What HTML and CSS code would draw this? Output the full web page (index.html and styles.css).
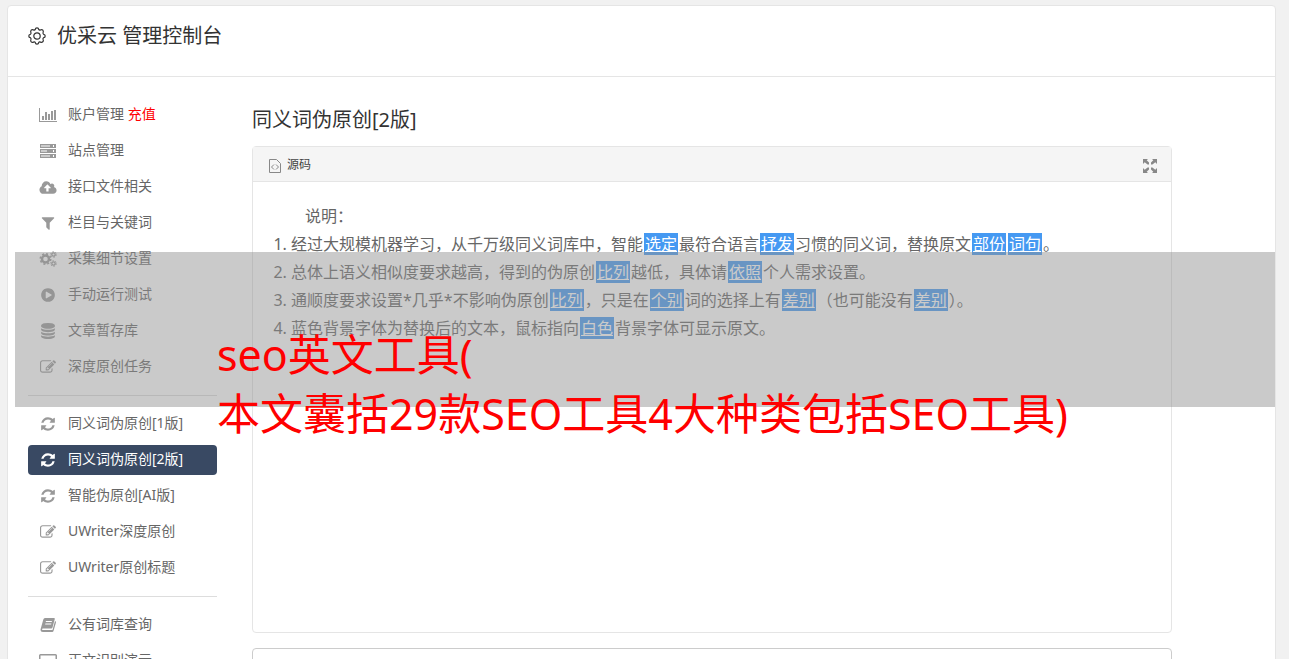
FILE: index.html
```
<!DOCTYPE html>
<html lang="zh-CN">

<head>
  <meta charset="UTF-8">
  <meta name="viewport" content="width=device-width, initial-scale=1.0">
  <title>优采云 管理控制台</title>
  <link rel="stylesheet" href="styles.css">
</head>

<body>

  <!-- 图标 -->
  <svg class="sprite" aria-hidden="true">
    <symbol id="i-chart" viewBox="0 0 18 16">
      <path d="M0 1h1v13h17v1H0zM3 9h2v4H3zM6 5h2v8H6zM9 7h2v6H9zM12 4h2v9h-2zM15 3h2v10h-2z" />
    </symbol>
    <symbol id="i-server" viewBox="0 0 18 16">
      <path fill-rule="evenodd" d="M1 1h16v4H1zM2 2v2h9V2zM14 2v2h1V2zM1 6h16v4H1zM2 7v2h6V7zM14 7v2h1V7zM1 11h16v4H1zM2 12v2h9v-2zM14 12v2h1v-2z" />
      <path opacity=".5" d="M2 2h9v2H2zM2 7h9v2H2zM2 12h9v2H2z" />
    </symbol>
    <symbol id="i-cloud" viewBox="0 0 1920 1792">
      <path d="M1280 992q0-14-9-23l-352-352q-9-9-23-9t-23 9l-351 351q-10 12-10 24 0 14 9 23t23 9h224v352q0 13 9.500 22.500t22.500 9.500h192q13 0 22.500-9.500t9.500-22.500v-352h224q13 0 22.500-9.500t9.500-22.500zm640 288q0 159-112.500 271.500t-271.500 112.500h-1088q-185 0-316.500-131.500t-131.500-316.500q0-130 70-240t188-165q-2-30-2-43 0-212 150-362t362-150q156 0 285.500 87t188.500 231q71-62 166-62 106 0 181 75t75 181q0 76-41 138 130 31 213.500 135.500t83.500 238.500z" />
    </symbol>
    <symbol id="i-filter" viewBox="0 0 1792 1792">
      <path d="M1595 295q17 41-14 70l-493 493v742q0 42-39 59-13 5-25 5-27 0-45-19l-256-256q-19-19-19-45v-486l-493-493q-31-29-14-70 17-39 59-39h1280q42 0 59 39z" />
    </symbol>
    <symbol id="i-gears" viewBox="0 0 18 16">
      <g fill="none" stroke="currentColor">
        <circle cx="6.500" cy="8" r="3.500" stroke-width="2.400" />
        <circle cx="6.500" cy="8" r="5.200" stroke-width="1.600" stroke-dasharray="2 2.084" />
        <circle cx="14.500" cy="3.500" r="1.700" stroke-width="1.300" />
        <circle cx="14.500" cy="3.500" r="2.800" stroke-width="1" stroke-dasharray="1.400 1.532" />
        <circle cx="14.500" cy="12.500" r="1.700" stroke-width="1.300" />
        <circle cx="14.500" cy="12.500" r="2.800" stroke-width="1" stroke-dasharray="1.400 1.532" />
      </g>
    </symbol>
    <symbol id="i-play" viewBox="0 0 1792 1792">
      <path d="M896 128q209 0 385.500 103t279.500 279.500 103 385.500-103 385.500-279.500 279.500-385.500 103-385.500-103-279.500-279.500-103-385.500 103-385.500 279.500-279.500 385.500-103zm384 823q32-18 32-55t-32-55l-544-320q-31-19-64-1-32 19-32 56v640q0 37 32 56 16 8 32 8 17 0 32-9z" />
    </symbol>
    <symbol id="i-database" viewBox="0 0 1792 1792">
      <path d="M896 768q237 0 443-43t325-127v170q0 69-103 128t-280 93.500-385 34.500-385-34.500-280-93.500-103-128v-170q119 84 325 127t443 43zm0 768q237 0 443-43t325-127v170q0 69-103 128t-280 93.500-385 34.500-385-34.500-280-93.500-103-128v-170q119 84 325 127t443 43zm0-384q237 0 443-43t325-127v170q0 69-103 128t-280 93.500-385 34.500-385-34.500-280-93.500-103-128v-170q119 84 325 127t443 43zm0-1152q208 0 385 34.500t280 93.500 103 128v128q0 69-103 128t-280 93.500-385 34.500-385-34.500-280-93.500-103-128v-128q0-69 103-128t280-93.500 385-34.500z" />
    </symbol>
    <symbol id="i-edit" viewBox="0 0 1792 1792">
      <path d="M888 1184l116-116-152-152-116 116v56h96v96h56zm440-720q-16-16-33 1l-350 350q-17 17-1 33t33-1l350-350q17-17 1-33zm80 594v190q0 119-84.500 203.500t-203.500 84.500h-832q-119 0-203.500-84.500t-84.500-203.500v-832q0-119 84.500-203.500t203.500-84.500h832q63 0 117 25 15 7 18 23 3 17-9 29l-49 49q-14 14-32 8-23-6-45-6h-832q-66 0-113 47t-47 113v832q0 66 47 113t113 47h832q66 0 113-47t47-113v-126q0-13 9-22l64-64q15-15 35-7t20 29zm-96-738l288 288-672 672h-288v-288zm444 132l-92 92-288-288 92-92q28-28 68-28t68 28l152 152q28 28 28 68t-28 68z" />
    </symbol>
    <symbol id="i-refresh" viewBox="0 0 1792 1792">
      <path d="M1639 1056q0 5-1 7-64 268-268 434.500t-478 166.500q-146 0-282.500-55t-243.500-157l-129 129q-19 19-45 19t-45-19-19-45v-448q0-26 19-45t45-19h448q26 0 45 19t19 45-19 45l-137 137q71 66 161 102t187 36q134 0 250-65t186-179q11-17 53-117 8-23 30-23h192q13 0 22.500 9.500t9.500 22.500zm25-800v448q0 26-19 45t-45 19h-448q-26 0-45-19t-19-45 19-45l138-138q-148-137-349-137-134 0-250 65t-186 179q-11 17-53 117-8 23-30 23h-199q-13 0-22.500-9.500t-9.500-22.500v-7q65-268 270-434.500t480-166.500q146 0 284 55.500t245 156.500l130-129q19-19 45-19t45 19 19 45z" />
    </symbol>
    <symbol id="i-book" viewBox="0 0 16 16">
      <path fill-rule="evenodd" d="M5 1h9q1 0 .8 1L12.500 10.500q-.3 1-1.300 1H3q-1 0-1 .8t1 .7h9.500L15 4l.8.500q.3.500.1 1.200L13.500 14q-.3 1-1.300 1H3Q.5 15 .5 12.500L3.300 2.500Q3.700 1 5 1zM6 4l-.3 1h6l.3-1zM5.400 6.500l-.3 1h6l.3-1z" />
    </symbol>
    <symbol id="i-screen" viewBox="0 0 18 16">
      <path fill-rule="evenodd" d="M1.500 1h15q1.500 0 1.500 1.500v9q0 1.500-1.500 1.500H12v2H6v-2H1.500Q0 13 0 11.500v-9Q0 1 1.500 1zM1.500 2.500v8h15v-8z" />
    </symbol>
  </svg>

  <div class="panel">
    <header class="panel-header">
      <svg class="logo" viewBox="0 0 18 18" aria-hidden="true">
        <g fill="none" stroke="currentColor" stroke-width="1.200" stroke-linejoin="round">
          <path d="M7.300 2.400Q7.400.8 9 .8t1.700 1.600q.6 1 1.800.5 1.400-.8 2.300.3t.3 2.300q-.3 1.300.5 1.800 1.600.1 1.600 1.700t-1.600 1.700q-.9.500-.5 1.800.7 1.400-.3 2.300t-2.300.3q-1.300-.5-1.800.5-.1 1.600-1.700 1.600t-1.700-1.600q-.5-1-1.800-.5-1.400.6-2.300-.3t-.3-2.300q.4-1.300-.5-1.800Q.8 10.600.8 9t1.600-1.700q.9-.5.5-1.800-.6-1.300.3-2.300t2.300-.3q1.200.5 1.800-.5z" />
          <circle cx="9" cy="9" r="3.200" />
        </g>
      </svg>
      <h1 class="panel-title">优采云 管理控制台</h1>
    </header>

    <div class="panel-body">
      <nav class="sidebar">
        <a href="#" class="menu-item"><svg class="icon"><use href="#i-chart" /></svg><span>账户管理 <span class="recharge">充值</span></span></a>
        <a href="#" class="menu-item"><svg class="icon"><use href="#i-server" /></svg>站点管理</a>
        <a href="#" class="menu-item"><svg class="icon"><use href="#i-cloud" /></svg>接口文件相关</a>
        <a href="#" class="menu-item"><svg class="icon"><use href="#i-filter" /></svg>栏目与关键词</a>
        <a href="#" class="menu-item"><svg class="icon"><use href="#i-gears" /></svg>采集细节设置</a>
        <a href="#" class="menu-item"><svg class="icon"><use href="#i-play" /></svg>手动运行测试</a>
        <a href="#" class="menu-item"><svg class="icon"><use href="#i-database" /></svg>文章暂存库</a>
        <a href="#" class="menu-item"><svg class="icon"><use href="#i-edit" /></svg>深度原创任务</a>
        <hr class="divider">
        <a href="#" class="menu-item"><svg class="icon"><use href="#i-refresh" /></svg>同义词伪原创[1版]</a>
        <a href="#" class="menu-item active"><svg class="icon"><use href="#i-refresh" /></svg>同义词伪原创[2版]</a>
        <a href="#" class="menu-item"><svg class="icon"><use href="#i-refresh" /></svg>智能伪原创[AI版]</a>
        <a href="#" class="menu-item"><svg class="icon"><use href="#i-edit" /></svg>UWriter深度原创</a>
        <a href="#" class="menu-item"><svg class="icon"><use href="#i-edit" /></svg>UWriter原创标题</a>
        <hr class="divider">
        <a href="#" class="menu-item"><svg class="icon"><use href="#i-book" /></svg>公有词库查询</a>
        <a href="#" class="menu-item"><svg class="icon"><use href="#i-screen" /></svg>正文识别演示</a>
      </nav>

      <main class="content">
        <h2 class="content-title">同义词伪原创[2版]</h2>

        <div class="editor">
          <div class="toolbar">
            <button type="button" class="tool">
              <svg class="tool-source" viewBox="0 0 12 14" aria-hidden="true">
                <path fill="none" stroke="currentColor" d="M.5.5h7l4 4v9H.5zM5 5.500L2.500 8 5 10.500M7 5.500L9.500 8 7 10.500" />
              </svg>
              源码
            </button>
            <button type="button" class="tool" aria-label="全屏">
              <svg class="tool-full" viewBox="0 0 14 14" aria-hidden="true">
                <path fill="currentColor" d="M0 0h5L3.700 1.300 6 3.600v2H4.600L1.700 3.300 0 5zM14 0v5l-1.700-1.700-2.900 2.300H8v-2l2.300-2.300L9 0zM0 14V9l1.700 1.700 2.900-2.300H6v2l-2.300 2.300L5 14zM14 14H9l1.300-1.300L8 10.400v-2h1.400l2.900 2.300L14 9z" />
              </svg>
            </button>
          </div>
          <div class="editor-body">
            <p class="intro">说明：</p>
            <ol class="notes">
              <li>经过大规模机器学习，从千万级同义词库中，智能<u class="word">选定</u>最符合语言<u class="word">抒发</u>习惯的同义词，替换原文<u class="word">部份</u><u class="word">词句</u>。</li>
              <li>总体上语义相似度要求越高，得到的伪原创<u class="word">比列</u>越低，具体请<u class="word">依照</u>个人需求设置。</li>
              <li>通顺度要求设置*几乎*不影响伪原创<u class="word">比列</u>，只是在<u class="word">个别</u>词的选择上有<u class="word">差别</u>（也可能没有<u class="word">差别</u>）。</li>
              <li>蓝色背景字体为替换后的文本，鼠标指向<u class="word">白色</u>背景字体可显示原文。</li>
            </ol>
          </div>
        </div>

        <div class="result"></div>
      </main>
    </div>
  </div>

  <!-- 标题遮罩 -->
  <div class="banner">
    <p class="banner-text">seo英文工具(<br>本文囊括29款SEO工具4大种类包括SEO工具)</p>
  </div>

</body>

</html>
```
FILE: styles.css
```
* {
  box-sizing: border-box;
}

body {
  margin: 0;
  height: 100vh;
  overflow: hidden;
  position: relative;
  padding: 5px 13px 0 7px;
  background: #f1f1f1;
  color: #666;
  font-family: "Noto Sans", "Noto Sans CJK SC", sans-serif;
  font-weight: 400;
  font-size: 14px;
}

.sprite {
  display: none;
}

.panel {
  background: #fff;
  border: 1px solid #e5e5e5;
  border-radius: 4px;
}

.panel-header {
  display: flex;
  align-items: center;
  gap: 11px;
  height: 71px;
  padding: 0 20px 10px;
  border-bottom: 1px solid #e5e5e5;
  color: #333;
}

.logo {
  width: 18px;
  height: 18px;
}

.panel-title,
.content-title {
  margin: 0;
  font-size: 20px;
  font-weight: 400;
  line-height: 24px;
  color: #333;
}

.panel-body {
  display: flex;
  gap: 35px;
  padding: 23px 103px 0 20px;
}

/* 左侧菜单 */

.sidebar {
  flex: 0 0 189px;
  display: flex;
  flex-direction: column;
  gap: 6px;
}

.menu-item {
  display: flex;
  align-items: flex-start;
  gap: 11px;
  height: 30px;
  padding: 0 11px;
  border-radius: 4px;
  color: #666;
  line-height: 28px;
  text-decoration: none;
  white-space: nowrap;
}

.menu-item.active {
  background: #394963;
  color: #fff;
}

.icon {
  flex: none;
  width: 18px;
  height: 16px;
  margin-top: 7px;
  color: #999;
  fill: currentColor;
}

.active .icon {
  color: #fff;
}

.recharge {
  color: #f00;
}

.divider {
  width: 100%;
  margin: 7px 0;
  border: 0;
  border-top: 1px solid #ddd;
}

/* 编辑器 */

.content {
  flex: 1;
  min-width: 0;
  padding-top: 8px;
}

.editor {
  margin-top: 14px;
  border: 1px solid #e5e5e5;
  border-radius: 4px;
}

.toolbar {
  display: flex;
  justify-content: space-between;
  align-items: center;
  height: 35px;
  padding: 0 14px 0 16px;
  background: #f5f5f5;
  border-bottom: 1px solid #e5e5e5;
}

.tool {
  display: flex;
  align-items: center;
  gap: 6px;
  padding: 0;
  border: 0;
  background: none;
  color: #444;
  font: inherit;
  font-size: 12px;
}

.tool svg {
  height: 14px;
  margin-top: 4px;
  color: #888;
}

.tool-source {
  width: 12px;
}

.tool-full {
  width: 14px;
}

.editor-body {
  min-height: 450px;
  padding: 20px;
  font-size: 16px;
  line-height: 28px;
}

.intro {
  margin: 0;
  text-indent: 2em;
}

.notes {
  margin: 0;
  padding-left: 18px;
}

.word {
  margin: 0 1px;
  padding: 0 1px;
  background: #4599f2;
  color: #fff;
}

.result {
  height: 200px;
  margin-top: 15px;
  border: 1px solid #ccc;
  border-radius: 4px;
}

/* 遮罩 */

.banner {
  position: absolute;
  top: 252px;
  left: 15px;
  right: 14px;
  height: 155px;
  padding: 73px 0 0 202px;
  background: rgba(145, 145, 145, 0.48);
}

.banner-text {
  margin: 0;
  color: #f00;
  font-size: 43px;
  line-height: 59px;
  white-space: nowrap;
}
```
